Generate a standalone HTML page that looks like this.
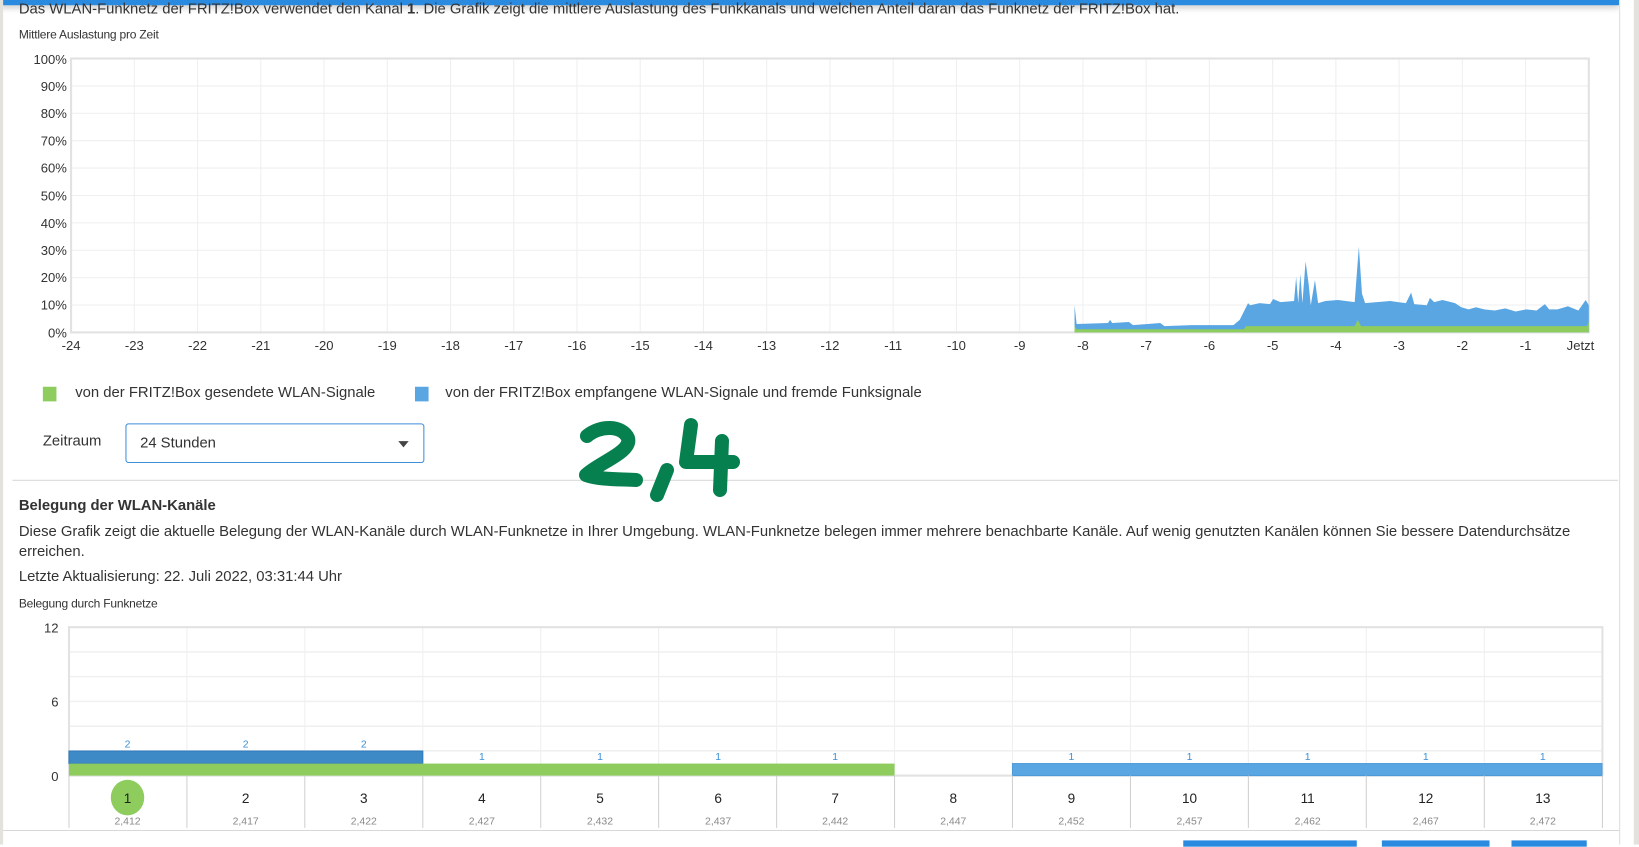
<!DOCTYPE html>
<html><head><meta charset="utf-8"><style>
*{margin:0;padding:0;box-sizing:border-box}
html,body{width:1639px;height:844px;overflow:hidden;background:#fff;font-family:"Liberation Sans",sans-serif;color:#333}
#w{position:absolute;left:0;top:0;width:1568px;height:808px;transform:scale(1.04528);transform-origin:0 0}
.a{position:absolute;white-space:nowrap}
.t{font-size:14.2px;letter-spacing:0;color:#333}
.s{font-size:11.5px;letter-spacing:-0.2px;color:#333}
</style></head><body>
<div id="w">
<div class="a" style="left:0;top:0;width:1549px;height:5px;background:#2a8ae0;box-shadow:0 2px 6px rgba(0,0,0,.25)"></div>
<div class="a" style="left:0;top:0;width:3px;height:808px;background:#e4e2dc"></div>
<div class="a" style="left:1549px;top:0;width:19px;height:808px;background:#fff;border-left:1px solid #ddd"></div>
<div class="a" style="left:1563px;top:0;width:5px;height:808px;background:#e4e2dc"></div>
<div class="a t" style="left:18px;top:1px">Das WLAN-Funknetz der FRITZ!Box verwendet den Kanal <b>1</b>. Die Grafik zeigt die mittlere Auslastung des Funkkanals und welchen Anteil daran das Funknetz der FRITZ!Box hat.</div>
<div class="a s" style="left:18px;top:28px">Mittlere Auslastung pro Zeit</div>

<svg class="a" style="left:0;top:45px" width="1548" height="300" viewBox="0 45 1548 300" font-family="Liberation Sans" font-size="12.5" fill="#333">
<g stroke="#efefef" stroke-width="1">
<line x1="68" y1="82.2" x2="1520" y2="82.2"/><line x1="68" y1="108.4" x2="1520" y2="108.4"/><line x1="68" y1="134.6" x2="1520" y2="134.6"/><line x1="68" y1="160.8" x2="1520" y2="160.8"/><line x1="68" y1="187" x2="1520" y2="187"/><line x1="68" y1="213.2" x2="1520" y2="213.2"/><line x1="68" y1="239.4" x2="1520" y2="239.4"/><line x1="68" y1="265.6" x2="1520" y2="265.6"/><line x1="68" y1="291.8" x2="1520" y2="291.8"/>
<line x1="128.5" y1="56" x2="128.5" y2="318"/><line x1="189" y1="56" x2="189" y2="318"/><line x1="249.5" y1="56" x2="249.5" y2="318"/><line x1="310" y1="56" x2="310" y2="318"/><line x1="370.5" y1="56" x2="370.5" y2="318"/><line x1="431" y1="56" x2="431" y2="318"/><line x1="491.5" y1="56" x2="491.5" y2="318"/><line x1="552" y1="56" x2="552" y2="318"/><line x1="612.5" y1="56" x2="612.5" y2="318"/><line x1="673" y1="56" x2="673" y2="318"/><line x1="733.5" y1="56" x2="733.5" y2="318"/><line x1="794" y1="56" x2="794" y2="318"/><line x1="854.5" y1="56" x2="854.5" y2="318"/><line x1="915" y1="56" x2="915" y2="318"/><line x1="975.5" y1="56" x2="975.5" y2="318"/><line x1="1036" y1="56" x2="1036" y2="318"/><line x1="1096.5" y1="56" x2="1096.5" y2="318"/><line x1="1157" y1="56" x2="1157" y2="318"/><line x1="1217.5" y1="56" x2="1217.5" y2="318"/><line x1="1278" y1="56" x2="1278" y2="318"/><line x1="1338.5" y1="56" x2="1338.5" y2="318"/><line x1="1399" y1="56" x2="1399" y2="318"/><line x1="1459.5" y1="56" x2="1459.5" y2="318"/>
</g>
<rect x="68" y="56" width="1452" height="262" fill="none" stroke="#e2e2e2" stroke-width="2"/>
<path fill="#5aa6e3" d="M1028,318 L1028,292 L1030,310 L1060,309 L1062,306 L1064,309 L1080,308 L1084,311 L1110,309 L1114,312 L1140,311 L1180,311 L1186,306 L1194,290 L1196,292 L1205,290 L1215,291 L1218,286 L1225,289 L1238,288 L1240,265 L1242,290 L1244,262 L1246,290 L1249,250 L1252,272 L1254,292 L1258,268 L1261,290 L1268,288 L1280,287 L1296,289 L1300,236 L1303,281 L1306,290 L1330,288 L1345,290 L1350,280 L1353,291 L1365,292 L1368,285 L1372,289 L1380,287 L1392,290 L1398,294 L1405,296 L1412,294 L1420,296 L1430,297 L1440,295 L1450,298 L1460,296 L1470,297 L1478,291 L1482,296 L1490,296 L1500,293 L1510,297 L1517,287 L1520,292 L1520,318 Z"/>
<path fill="#8ecc5e" d="M1028,318 L1028,312 L1030,315 L1190,315 L1192,312 L1296,312 L1299,306 L1302,312 L1400,312 L1518,312 L1520,308 L1520,318 Z"/>
<g text-anchor="end"><text x="64" y="61">100%</text><text x="64" y="87">90%</text><text x="64" y="113">80%</text><text x="64" y="139">70%</text><text x="64" y="165">60%</text><text x="64" y="192">50%</text><text x="64" y="218">40%</text><text x="64" y="244">30%</text><text x="64" y="270">20%</text><text x="64" y="296">10%</text><text x="64" y="323">0%</text></g>
<g text-anchor="middle"><text x="68" y="335">-24</text><text x="128.5" y="335">-23</text><text x="189" y="335">-22</text><text x="249.5" y="335">-21</text><text x="310" y="335">-20</text><text x="370.5" y="335">-19</text><text x="431" y="335">-18</text><text x="491.5" y="335">-17</text><text x="552" y="335">-16</text><text x="612.5" y="335">-15</text><text x="673" y="335">-14</text><text x="733.5" y="335">-13</text><text x="794" y="335">-12</text><text x="854.5" y="335">-11</text><text x="915" y="335">-10</text><text x="975.5" y="335">-9</text><text x="1036" y="335">-8</text><text x="1096.5" y="335">-7</text><text x="1157" y="335">-6</text><text x="1217.5" y="335">-5</text><text x="1278" y="335">-4</text><text x="1338.5" y="335">-3</text><text x="1399" y="335">-2</text><text x="1459.5" y="335">-1</text><text x="1512" y="335">Jetzt</text></g>
</svg>

<div class="a" style="left:41px;top:370px;width:13px;height:14px;background:#8ecc5e"></div>
<div class="a t" style="left:72px;top:368px">von der FRITZ!Box gesendete WLAN-Signale</div>
<div class="a" style="left:397px;top:370px;width:13px;height:14px;background:#5aa6e3"></div>
<div class="a t" style="left:426px;top:368px">von der FRITZ!Box empfangene WLAN-Signale und fremde Funksignale</div>
<div class="a t" style="left:41px;top:414px">Zeitraum</div>
<div class="a" style="left:120px;top:405px;width:286px;height:38px;border:1px solid #3d8fdc;border-radius:3px"></div>
<div class="a t" style="left:134px;top:416px">24 Stunden</div>
<div class="a" style="left:381px;top:422px;width:0;height:0;border-left:5px solid transparent;border-right:5px solid transparent;border-top:6px solid #444"></div>
<div class="a" style="left:12px;top:459px;width:1536px;height:1px;background:#d8d8d8"></div>
<div class="a t" style="left:18px;top:476px;font-weight:bold">Belegung der WLAN-Kanäle</div>
<div class="a t" style="left:18px;top:501px">Diese Grafik zeigt die aktuelle Belegung der WLAN-Kanäle durch WLAN-Funknetze in Ihrer Umgebung. WLAN-Funknetze belegen immer mehrere benachbarte Kanäle. Auf wenig genutzten Kanälen können Sie bessere Datendurchsätze</div>
<div class="a t" style="left:18px;top:520px">erreichen.</div>
<div class="a t" style="left:18px;top:544px">Letzte Aktualisierung: 22. Juli 2022, 03:31:44 Uhr</div>
<div class="a s" style="left:18px;top:572px">Belegung durch Funknetze</div>

<svg class="a" style="left:0;top:590px" width="1548" height="210" viewBox="0 590 1548 210" font-family="Liberation Sans" fill="#333">
<g stroke="#f0f0f0" stroke-width="1.5">
<line x1="66" y1="623.7" x2="1533" y2="623.7"/><line x1="66" y1="647.3" x2="1533" y2="647.3"/><line x1="66" y1="671" x2="1533" y2="671"/><line x1="66" y1="694.7" x2="1533" y2="694.7"/><line x1="66" y1="718.3" x2="1533" y2="718.3"/>
</g>
<g stroke="#efefef"><line x1="178.8" y1="600" x2="178.8" y2="742"/><line x1="291.6" y1="600" x2="291.6" y2="742"/><line x1="404.5" y1="600" x2="404.5" y2="742"/><line x1="517.3" y1="600" x2="517.3" y2="742"/><line x1="630.1" y1="600" x2="630.1" y2="742"/><line x1="743" y1="600" x2="743" y2="742"/><line x1="855.8" y1="600" x2="855.8" y2="742"/><line x1="968.6" y1="600" x2="968.6" y2="742"/><line x1="1081.5" y1="600" x2="1081.5" y2="742"/><line x1="1194.3" y1="600" x2="1194.3" y2="742"/><line x1="1307.1" y1="600" x2="1307.1" y2="742"/><line x1="1420" y1="600" x2="1420" y2="742"/></g>
<rect x="66" y="600" width="1467" height="142" fill="none" stroke="#e2e2e2" stroke-width="2"/>
<rect x="66" y="718.5" width="338.5" height="12" fill="#3e8ac7" stroke="#2e7bbd"/>
<rect x="66" y="730.5" width="789.8" height="11.5" fill="#8ecc5e"/>
<rect x="968.6" y="730.5" width="564" height="11.5" fill="#5aa6e3" stroke="#4c9ad8"/>
<g font-size="10" fill="#3b8fd6" text-anchor="middle"><text x="122" y="715">2</text><text x="235" y="715">2</text><text x="348" y="715">2</text><text x="461" y="727">1</text><text x="574" y="727">1</text><text x="687" y="727">1</text><text x="799" y="727">1</text><text x="1025" y="727">1</text><text x="1138" y="727">1</text><text x="1251" y="727">1</text><text x="1364" y="727">1</text><text x="1476" y="727">1</text></g>
<g font-size="12.5" text-anchor="end"><text x="56" y="605">12</text><text x="56" y="676">6</text><text x="56" y="747">0</text></g>
<g stroke="#d0d0d0"><line x1="66" y1="742" x2="66" y2="792"/><line x1="178.8" y1="742" x2="178.8" y2="792"/><line x1="291.6" y1="742" x2="291.6" y2="792"/><line x1="404.5" y1="742" x2="404.5" y2="792"/><line x1="517.3" y1="742" x2="517.3" y2="792"/><line x1="630.1" y1="742" x2="630.1" y2="792"/><line x1="743" y1="742" x2="743" y2="792"/><line x1="855.8" y1="742" x2="855.8" y2="792"/><line x1="968.6" y1="742" x2="968.6" y2="792"/><line x1="1081.5" y1="742" x2="1081.5" y2="792"/><line x1="1194.3" y1="742" x2="1194.3" y2="792"/><line x1="1307.1" y1="742" x2="1307.1" y2="792"/><line x1="1420" y1="742" x2="1420" y2="792"/><line x1="1533" y1="742" x2="1533" y2="792"/></g>
<ellipse cx="122" cy="763" rx="16" ry="17" fill="#8ecc5e"/>
<g font-size="13" text-anchor="middle" fill="#222"><text x="122" y="768">1</text><text x="235" y="768">2</text><text x="348" y="768">3</text><text x="461" y="768">4</text><text x="574" y="768">5</text><text x="687" y="768">6</text><text x="799" y="768">7</text><text x="912" y="768">8</text><text x="1025" y="768">9</text><text x="1138" y="768">10</text><text x="1251" y="768">11</text><text x="1364" y="768">12</text><text x="1476" y="768">13</text></g>
<g font-size="10" text-anchor="middle" fill="#888"><text x="122" y="789">2,412</text><text x="235" y="789">2,417</text><text x="348" y="789">2,422</text><text x="461" y="789">2,427</text><text x="574" y="789">2,432</text><text x="687" y="789">2,437</text><text x="799" y="789">2,442</text><text x="912" y="789">2,447</text><text x="1025" y="789">2,452</text><text x="1138" y="789">2,457</text><text x="1251" y="789">2,462</text><text x="1364" y="789">2,467</text><text x="1476" y="789">2,472</text></g>
</svg>
<div class="a" style="left:3px;top:794px;width:1546px;height:1px;background:#d8d8d8"></div>
<div class="a" style="left:1132px;top:804px;width:166px;height:6px;background:#2a8ae0"></div>
<div class="a" style="left:1322px;top:804px;width:103px;height:6px;background:#2a8ae0"></div>
<div class="a" style="left:1446px;top:804px;width:72px;height:6px;background:#2a8ae0"></div>
</div>
<svg style="position:absolute;left:0;top:0" width="1639" height="844" fill="none" stroke="#078050" stroke-width="14" stroke-linecap="round" stroke-linejoin="round">
<path d="M587,436 C600,425 622,425 628,438 C632,452 600,462 586,475 C600,480 622,479 636,480"/>
<path d="M667,470 L657,495"/>
<path d="M691,425 L686,462 L733,462"/>
<path d="M722,441 L720,490"/>
</svg>
</body></html>
